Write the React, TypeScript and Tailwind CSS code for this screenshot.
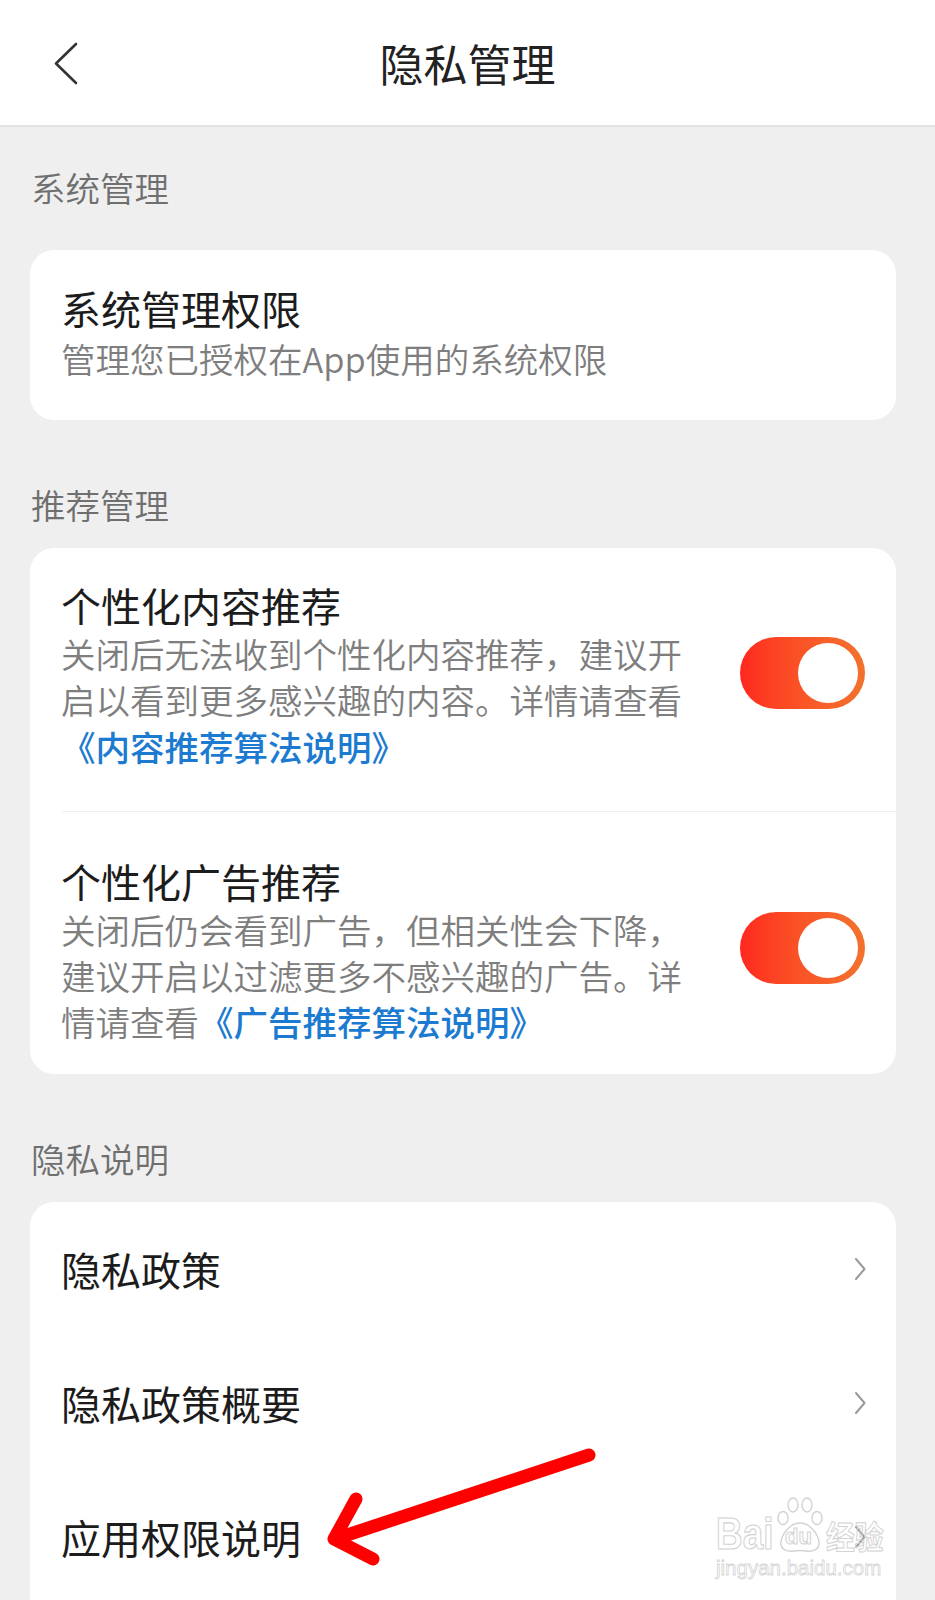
import React from "react";

function Toggle() {
  return (
    <div className="ml-auto mb-[5px] flex h-[72px] w-[125px] shrink-0 items-center justify-end rounded-full bg-linear-to-r from-[#ff251f] to-[#f2722d] pr-[7px]">
      <div className="h-[60px] w-[60px] rounded-full bg-white" />
    </div>
  );
}

function Chevron() {
  return (
    <svg width="14" height="24" viewBox="0 0 14 24" className="shrink-0">
      <path d="M3 2 L11.5 12 L3 22" fill="none" stroke="#9a9a9a" strokeWidth="2" strokeLinecap="round" strokeLinejoin="round" />
    </svg>
  );
}

function SectionLabel({ children, className }: { children: React.ReactNode; className: string }) {
  return (
    <div className={`px-[31px] text-[34.5px] font-[350] leading-[48px] text-[#6f6f6f] ${className}`}>{children}</div>
  );
}

export default function App() {
  return (
    <div className="relative h-[1600px] w-[935px] overflow-hidden bg-[#efefef] font-['Noto_Sans_CJK_SC','Noto_Sans',sans-serif]">
      {/* Header */}
      <div className="relative flex h-[127px] items-center justify-center border-b-2 border-[#e3e3e3] bg-white">
        <svg width="30" height="46" viewBox="0 0 30 46" className="absolute left-[52px] top-[41px]">
          <path d="M24 3 L4 22.5 L24 42" fill="none" stroke="#333333" strokeWidth="2.6" strokeLinecap="round" strokeLinejoin="round" />
        </svg>
        <div className="text-[44px] leading-[56px] text-[#222222]">隐私管理</div>
      </div>

      <SectionLabel className="mt-[36px]">系统管理</SectionLabel>

      {/* Card 1 */}
      <div className="ml-[30px] mr-[39px] mt-[39px] rounded-[24px] bg-white px-[31px] pt-[33px] pb-[37px]">
        <div className="text-[40px] leading-[50px] text-[#1c1c1c]">系统管理权限</div>
        <div className="text-[34.5px] font-[350] leading-[50px] text-[#7e7e7e]">管理您已授权在App使用的系统权限</div>
      </div>

      <SectionLabel className="mt-[60px]">推荐管理</SectionLabel>

      {/* Card 2 */}
      <div className="ml-[30px] mr-[39px] mt-[20px] rounded-[24px] bg-white">
        <div className="flex items-center pl-[31px] pr-[31px] pt-[32px] pb-[41px]">
          <div className="w-[626px]">
            <div className="text-[40px] leading-[50px] text-[#1c1c1c]">个性化内容推荐</div>
            <div className="text-[34.5px] font-[350] leading-[46px] text-[#7e7e7e]">
              关闭后无法收到个性化内容推荐，建议开启以看到更多感兴趣的内容。详情请查看
            </div>
            <div className="text-[34.5px] font-medium leading-[48px] text-[#1c7bd1]">《内容推荐算法说明》</div>
          </div>
          <Toggle />
        </div>
        <div className="ml-[32px] border-t border-[#efefef]" />
        <div className="flex items-center pl-[31px] pr-[31px] pt-[44px] pb-[30px]">
          <div className="w-[626px]">
            <div className="text-[40px] leading-[50px] text-[#1c1c1c]">个性化广告推荐</div>
            <div className="text-[34.5px] font-[350] leading-[46px] text-[#7e7e7e]">
              关闭后仍会看到广告，但相关性会下降，建议开启以过滤更多不感兴趣的广告。详情请查看
              <span className="font-medium text-[#1c7bd1]">《广告推荐算法说明》</span>
            </div>
          </div>
          <Toggle />
        </div>
      </div>

      <SectionLabel className="mt-[60px]">隐私说明</SectionLabel>

      {/* Card 3 */}
      <div className="ml-[30px] mr-[39px] mt-[20px] rounded-[24px] bg-white pt-[0px] pb-[40px]">
        {["隐私政策", "隐私政策概要", "应用权限说明"].map((t) => (
          <div key={t} className="flex h-[134px] items-center pl-[31px] pr-[29px]">
            <div className="text-[40px] leading-[50px] text-[#1c1c1c]">{t}</div>
            <div className="ml-auto">
              <Chevron />
            </div>
          </div>
        ))}
      </div>

      {/* Red annotation arrow */}
      <svg className="pointer-events-none absolute left-0 top-0" width="935" height="1600" viewBox="0 0 935 1600">
        <g fill="none" stroke="#ff0000" strokeWidth="13" strokeLinecap="round" strokeLinejoin="round">
          <path d="M589 1455 L338 1538" />
          <path d="M356 1499 L334 1539 L373 1559" />
        </g>
      </svg>

      {/* Baidu jingyan watermark */}
      <div className="pointer-events-none absolute left-[716px] top-[1496px] select-none">
        <div className="flex h-[58px] items-end">
          <span className="inline-block w-[60px] origin-left [transform:scaleX(0.82)] font-['Liberation_Sans',sans-serif] text-[45px] font-bold leading-[40px] text-transparent [-webkit-text-stroke:1.2px_#d2d2d2]">
            Bai
          </span>
          <div className="relative h-[58px] w-[48px]">
            <svg width="48" height="58" viewBox="0 0 48 58" className="absolute left-0 top-0">
              <g fill="none" stroke="#d2d2d2" strokeWidth="1.4">
                <ellipse cx="7" cy="22" rx="5" ry="6.5" />
                <ellipse cx="17" cy="9" rx="5" ry="7" />
                <ellipse cx="31" cy="9" rx="5" ry="7" />
                <ellipse cx="41" cy="22" rx="5" ry="6.5" />
                <path d="M24 27 C14 27 6 38 5 46 C4 54 12 56 18 55 C21 54.5 27 54.5 30 55 C36 56 44 54 43 46 C42 38 34 27 24 27 Z" />
              </g>
            </svg>
            <span className="absolute left-[9px] top-[30px] font-['Liberation_Sans',sans-serif] text-[22px] font-bold leading-[22px] text-transparent [-webkit-text-stroke:1px_#d2d2d2]">
              du
            </span>
          </div>
          <span className="ml-[2px] inline-block origin-left [transform:scaleX(0.9)] text-[32px] font-bold leading-[38px] text-transparent [-webkit-text-stroke:1px_#d2d2d2]">
            经验
          </span>
        </div>
        <div className="mt-[3px] font-['Liberation_Sans',sans-serif] text-[20.5px] leading-[22px] text-transparent [-webkit-text-stroke:0.8px_#d4d4d4]">
          jingyan.baidu.com
        </div>
      </div>
    </div>
  );
}
